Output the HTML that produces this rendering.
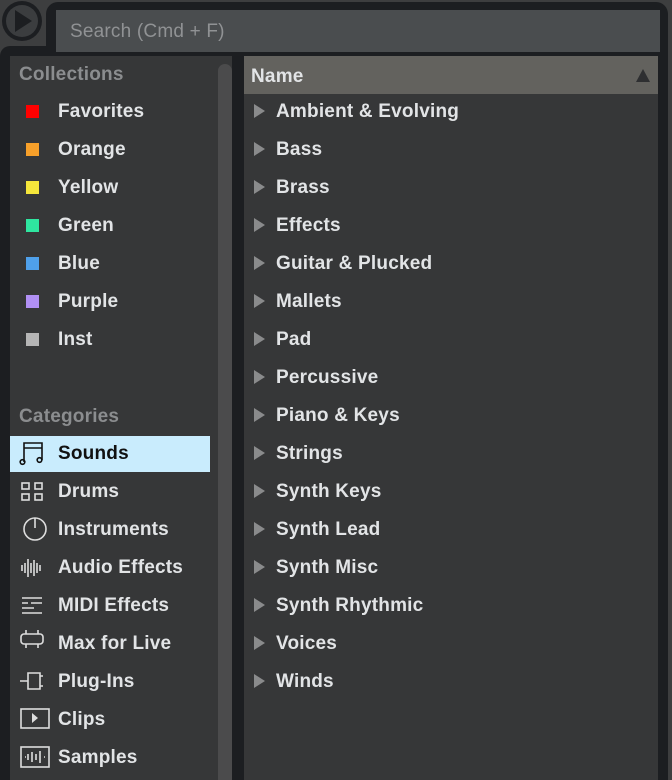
<!DOCTYPE html><html><head><style>
body{margin:0;width:672px;height:780px;background:#3d3e3f;position:relative;overflow:hidden;font-family:"Liberation Sans",sans-serif}
.a{position:absolute}
.t{color:#e2e4e6;font-size:19px;font-weight:bold;letter-spacing:0.2px;white-space:nowrap}
.h{color:#8b8d8f;font-size:19px;font-weight:bold;letter-spacing:0.2px}
.sq{width:13px;height:13px}
.tri{width:0;height:0;border-left:11px solid #8a8b8c;border-top:7px solid transparent;border-bottom:7px solid transparent}
svg{position:absolute}
</style></head><body>
<div class="a" style="left:46px;top:2px;width:622px;height:60px;background:#1c1e21;border-radius:12px 12px 0 0"></div>
<div class="a" style="left:0;top:46px;width:668px;height:734px;background:#1c1e21;border-radius:10px 0 0 0"></div>
<div class="a" style="left:2px;top:1px;width:40px;height:40px;border-radius:50%;background:#1c1e21"></div>
<div class="a" style="left:6px;top:5px;width:32px;height:32px;border-radius:50%;background:#3b3d3f"></div>
<div class="a" style="left:15px;top:10px;border-left:17px solid #1c1e21;border-top:11px solid transparent;border-bottom:11px solid transparent"></div>
<div class="a" style="left:56px;top:10px;width:604px;height:42px;background:#4a4d4f"></div>
<div class="a h" style="left:70px;top:21px;color:#909294;font-weight:normal">Search (Cmd + F)</div>
<div class="a" style="left:10px;top:56px;width:222px;height:724px;background:#363738"></div>
<div class="a" style="left:218px;top:64px;width:14px;height:716px;background:#4b4b4c;border-radius:7px 7px 0 0"></div>
<div class="a" style="left:244px;top:56px;width:414px;height:724px;background:#363738"></div>
<div class="a" style="left:244px;top:56px;width:414px;height:38px;background:#63625e"></div>
<div class="a t" style="left:251px;top:66px">Name</div>
<div class="a" style="left:636px;top:69px;border-bottom:13px solid #2e2f31;border-left:7px solid transparent;border-right:7px solid transparent"></div>
<div class="a h" style="left:19px;top:64px">Collections</div>
<div class="a h" style="left:19px;top:406px">Categories</div>
<div class="a" style="left:10px;top:436px;width:200px;height:36px;background:#c9ecfd"></div>
<div id="L"></div><div id="R"></div>
<svg width="36" height="340" style="top:438px;left:18px" fill="none" stroke-width="1.6">
<g stroke="#111"><path d="M6 24V5h18v17M6 10h18"/><circle cx="4.5" cy="24" r="2.3"/><circle cx="21.5" cy="22" r="2.3"/></g>
<g stroke="#ddd">
<rect x="4" y="45" width="7" height="6"/><rect x="17" y="45" width="7" height="6"/><rect x="4" y="56" width="7" height="6"/><rect x="17" y="56" width="7" height="6"/>
<circle cx="17" cy="91" r="11"/><path d="M17 80v10"/>
<path d="M4 127v6M7 125v10M10 121v18M13 125v10M16 122v16M19 125v10M22 127v6"/>
<path d="M4 160h20M4 165h6M13 165h11M4 170h12M4 175h20"/>
<path d="M6 196h16a3 3 0 0 1 3 3v4a3 3 0 0 1-3 3H6a3 3 0 0 1-3-3v-4a3 3 0 0 1 3-3zM8 196v-4M20 196v-4M8 206v4M20 206v4"/>
<path d="M2 243h8M10 235h12v16H10zM22 238h3M22 248h3"/>
<rect x="3" y="271" width="28" height="19"/>
<rect x="3" y="309" width="28" height="20"/><path d="M7 319h1M10 316v6M14 314v10M18 316v6M22 313v12M26 319h1"/>
</g>
<path d="M14 275l6 5-6 5z" fill="#ddd"/>
</svg>
<script>
var c=[["Favorites","#f00"],["Orange","#f7a02a"],["Yellow","#f5e63b"],["Green","#2fe6a0"],["Blue","#4fa0ea"],["Purple","#b190f4"],["Inst","#b5b5b5"]],h="";
c.forEach(function(x,i){var y=111+i*38;h+='<div class="a sq" style="left:26px;top:'+(y-6)+'px;background:'+x[1]+'"></div><div class="a t" style="left:58px;top:'+(y-10)+'px">'+x[0]+'</div>'});
["Sounds","Drums","Instruments","Audio Effects","MIDI Effects","Max for Live","Plug-Ins","Clips","Samples"].forEach(function(x,i){var y=453+i*38;h+='<div class="a t" style="left:58px;top:'+(y-10)+'px;'+(i==0?'color:#111;':'')+'">'+x+'</div>'});
document.getElementById("L").innerHTML=h;h="";
["Ambient &amp; Evolving","Bass","Brass","Effects","Guitar &amp; Plucked","Mallets","Pad","Percussive","Piano &amp; Keys","Strings","Synth Keys","Synth Lead","Synth Misc","Synth Rhythmic","Voices","Winds"].forEach(function(x,i){var y=111+i*38;h+='<div class="a tri" style="left:254px;top:'+(y-7)+'px"></div><div class="a t" style="left:276px;top:'+(y-10)+'px">'+x+'</div>'});
document.getElementById("R").innerHTML=h;
</script>
</body></html>
